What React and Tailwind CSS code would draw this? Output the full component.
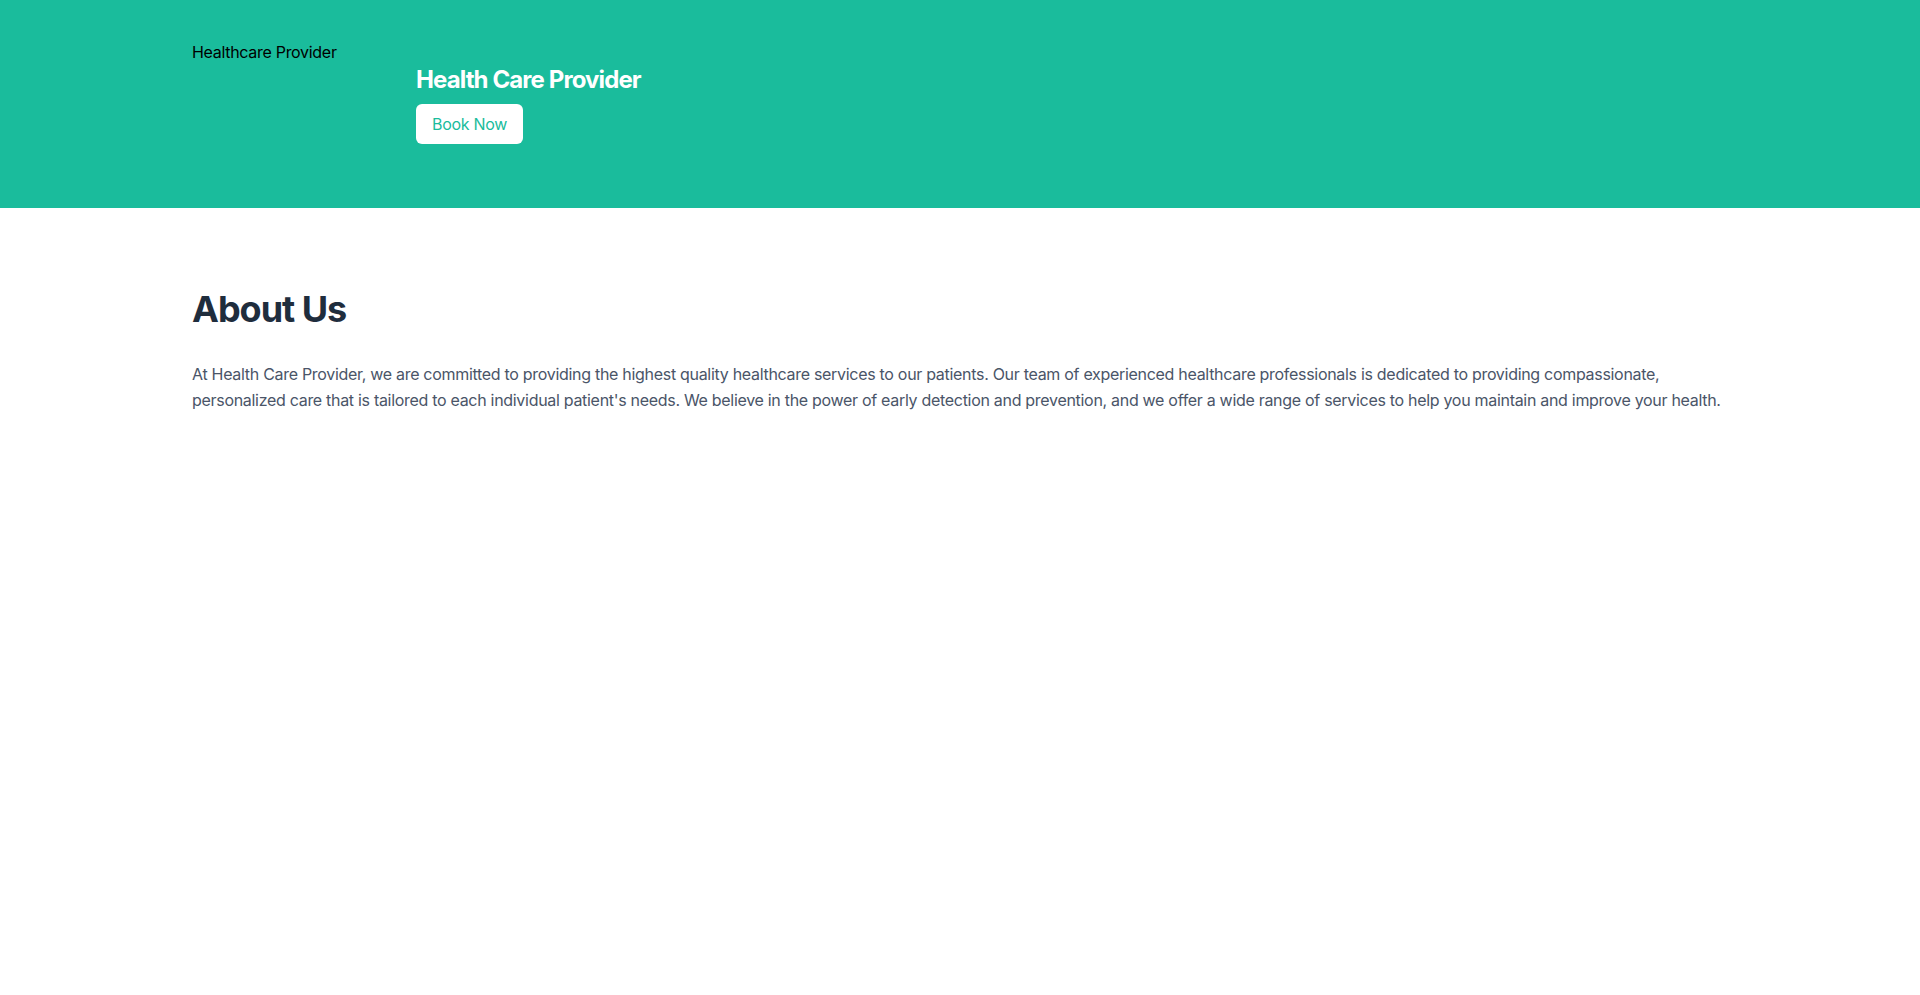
export default function App() {
  return (
    <div className="min-h-screen bg-white" style={{ fontFamily: "Inter, 'Noto Sans', sans-serif" }}>
      <header className="bg-[#1abc9c]">
        <div className="mx-auto flex max-w-[1536px] items-start pt-10 pb-16">
          <div className="w-56 text-base leading-6 tracking-[-0.3px] text-black">Healthcare Provider</div>
          <div className="pt-6">
            <h1 className="mb-2 text-2xl font-bold leading-8 tracking-[-0.9px] text-white">Health Care Provider</h1>
            <button className="rounded-md bg-white px-4 py-2 text-base leading-6 tracking-[-0.3px] text-[#1abc9c]">Book Now</button>
          </div>
        </div>
      </header>
      <section className="mx-auto max-w-[1536px] pt-[81px]">
        <h2 className="mb-8 text-4xl font-bold leading-10 tracking-[-1px] text-[#1f2d3d]">About Us</h2>
        <p className="text-base leading-relaxed tracking-[-0.3px] text-[#4a5568]">
          At Health Care Provider, we are committed to providing the highest quality healthcare services to our patients. Our team of experienced healthcare professionals is dedicated to providing compassionate, personalized care that is tailored to each individual patient's needs. We believe in the power of early detection and prevention, and we offer a wide range of services to help you maintain and improve your health.
        </p>
      </section>
    </div>
  );
}
